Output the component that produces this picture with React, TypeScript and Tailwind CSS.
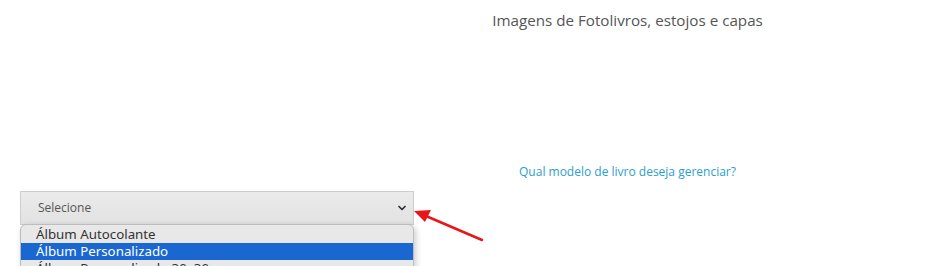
import { ChevronDown } from "lucide-react";

const options = ["Álbum Autocolante", "Álbum Personalizado", "Álbum Personalizado 30x30"];

export default function App() {
  return (
    <div className="relative h-[266px] w-[942px] overflow-hidden bg-white font-['Open_Sans',sans-serif]">
      <div className="pl-[313px] pt-[10px] text-center">
        <h2 className="text-[15.2px] leading-5 text-[#555]">Imagens de Fotolivros, estojos e capas</h2>
      </div>

      <div className="mt-[134px] pl-[313px] text-center text-[12px] leading-4">
        <a className="text-[#2ba0cf]">Qual modelo de livro deseja gerenciar?</a>
      </div>

      <div className="relative ml-[20px] mt-[11px] w-[394px]">
        <div className="flex h-[34px] items-center justify-between border border-[#cdcdcd] bg-gradient-to-b from-[#ebebeb] to-[#e2e2e2] pl-[17px] pr-[5px]">
          <span className="text-[12px] text-[#555]">Selecione</span>
          <ChevronDown size={12} strokeWidth={3.5} className="text-[#333]" />
        </div>

        {/* native dropdown list, open */}
        <div className="absolute left-0 top-[33px] w-[394px] rounded-t-[6px] border border-[#bdbdbd] bg-[#e8e8e8] pt-[1px] font-['Noto_Sans',sans-serif] text-[13.3px] leading-[17px] text-[#333] shadow-[2px_2px_6px_rgba(0,0,0,0.2)]">
          {options.map((opt, i) => (
            <div
              key={opt}
              className={i === 1 ? "bg-[#1a67d2] pl-[15px] text-white" : "pl-[15px]"}
            >
              {opt}
            </div>
          ))}
        </div>
      </div>

      {/* red annotation arrow */}
      <svg className="absolute left-0 top-0" width="942" height="266">
        <line x1="482" y1="240" x2="426" y2="216" stroke="#e8161b" strokeWidth="2.5" strokeLinecap="round" />
        <polygon points="414,211 431,210 425,222" fill="#e8161b" />
      </svg>
    </div>
  );
}
